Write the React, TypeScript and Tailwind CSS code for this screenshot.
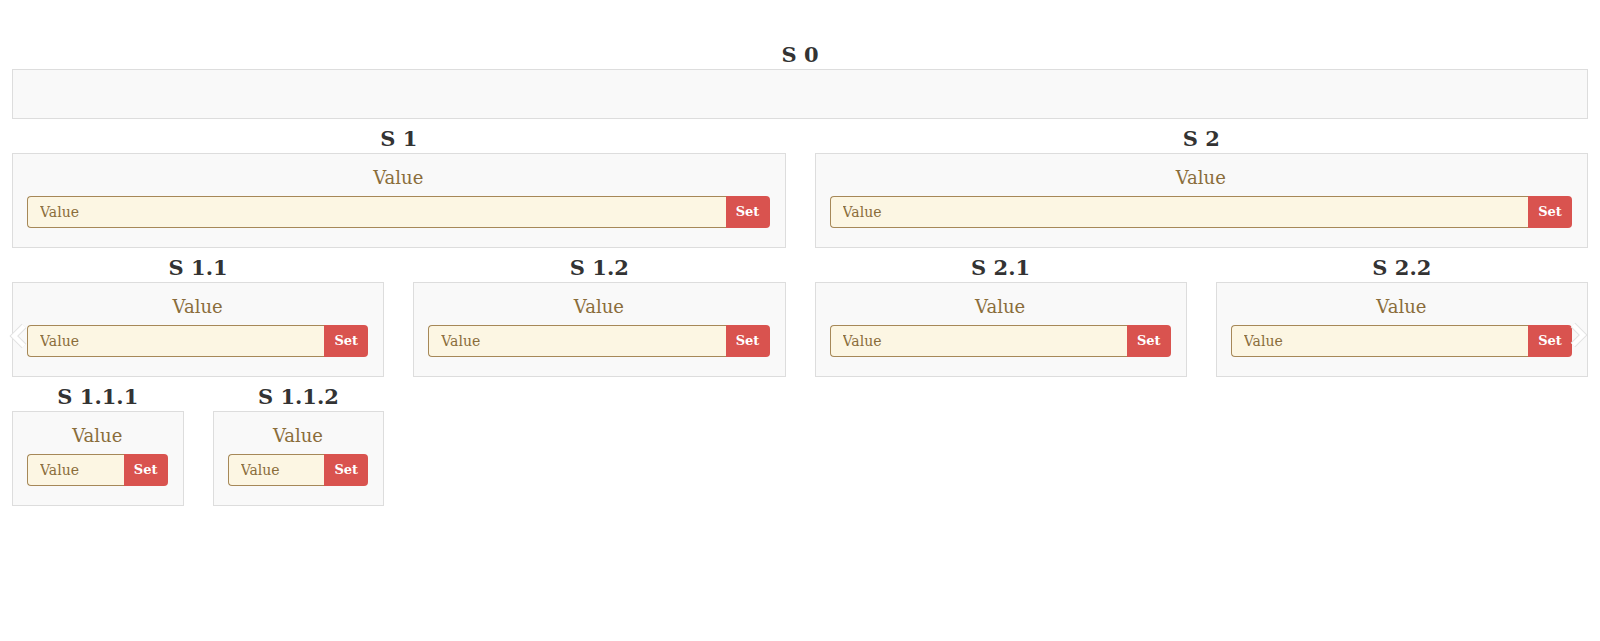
type TreeNode = {
  title: string;
  input?: boolean;
  children?: TreeNode[];
};

const tree: TreeNode = {
  title: 'S 0',
  input: false,
  children: [
    {
      title: 'S 1',
      children: [
        {
          title: 'S 1.1',
          children: [{ title: 'S 1.1.1' }, { title: 'S 1.1.2' }],
        },
        { title: 'S 1.2' },
      ],
    },
    {
      title: 'S 2',
      children: [{ title: 'S 2.1' }, { title: 'S 2.2' }],
    },
  ],
};

const serif = { fontFamily: '"DejaVu Serif", serif' };

const ValueSetter = () => (
  <div className="pt-[10px] pb-[19px] pl-[14px] pr-[15px]">
    <div className="text-center text-[18px] leading-[28px] text-[#8a6d3b]">Value</div>
    <div className="mt-[4px] flex h-[32px]">
      <input
        placeholder="Value"
        className="min-w-0 flex-1 rounded-l-[4px] border border-r-0 border-[#a68858] bg-[#fcf6e3] pl-[12px] text-[14px] text-[#8a6d3b] placeholder:text-[#8a6d3b] outline-none"
        style={serif}
      />
      <button className="w-[44px] rounded-r-[4px] bg-[#d9534f] text-[13px] font-bold text-white" style={serif}>
        Set
      </button>
    </div>
  </div>
);

const Node = ({ node }: { node: TreeNode }) => (
  <div className="flex flex-col">
    <h3 className="pt-[7px] pb-[1px] text-center text-[21px] font-bold leading-[26px] text-[#333333]">{node.title}</h3>
    <div className="border border-[#dddddd] bg-[#f9f9f9]">
      {node.input === false ? <div className="h-[48px]" /> : <ValueSetter />}
    </div>
    {node.children && (
      <div className="flex gap-[29px]">
        {node.children.map((c) => (
          <div key={c.title} className="w-[calc(50%-14.5px)]">
            <Node node={c} />
          </div>
        ))}
      </div>
    )}
  </div>
);

const Chevron = ({ dir }: { dir: 'left' | 'right' }) => {
  const pts = dir === 'left' ? '15,3 5,13 15,23' : '5,3 15,13 5,23';
  return (
    <svg width="20" height="26" viewBox="0 0 20 26">
      <polyline points={pts} fill="none" stroke="#e2e2e2" strokeWidth="6.5" strokeLinejoin="miter" />
      <polyline points={pts} fill="none" stroke="#ffffff" strokeWidth="4.5" strokeLinejoin="miter" />
    </svg>
  );
};

export default function App() {
  return (
    <div className="relative min-h-[641px] bg-white pt-[35px]" style={serif}>
      <div className="ml-[12px] w-[1576px]">
        <Node node={tree} />
      </div>
      <div className="absolute left-[9px] top-[323px]">
        <Chevron dir="left" />
      </div>
      <div className="absolute left-[1568px] top-[322px]">
        <Chevron dir="right" />
      </div>
    </div>
  );
}
